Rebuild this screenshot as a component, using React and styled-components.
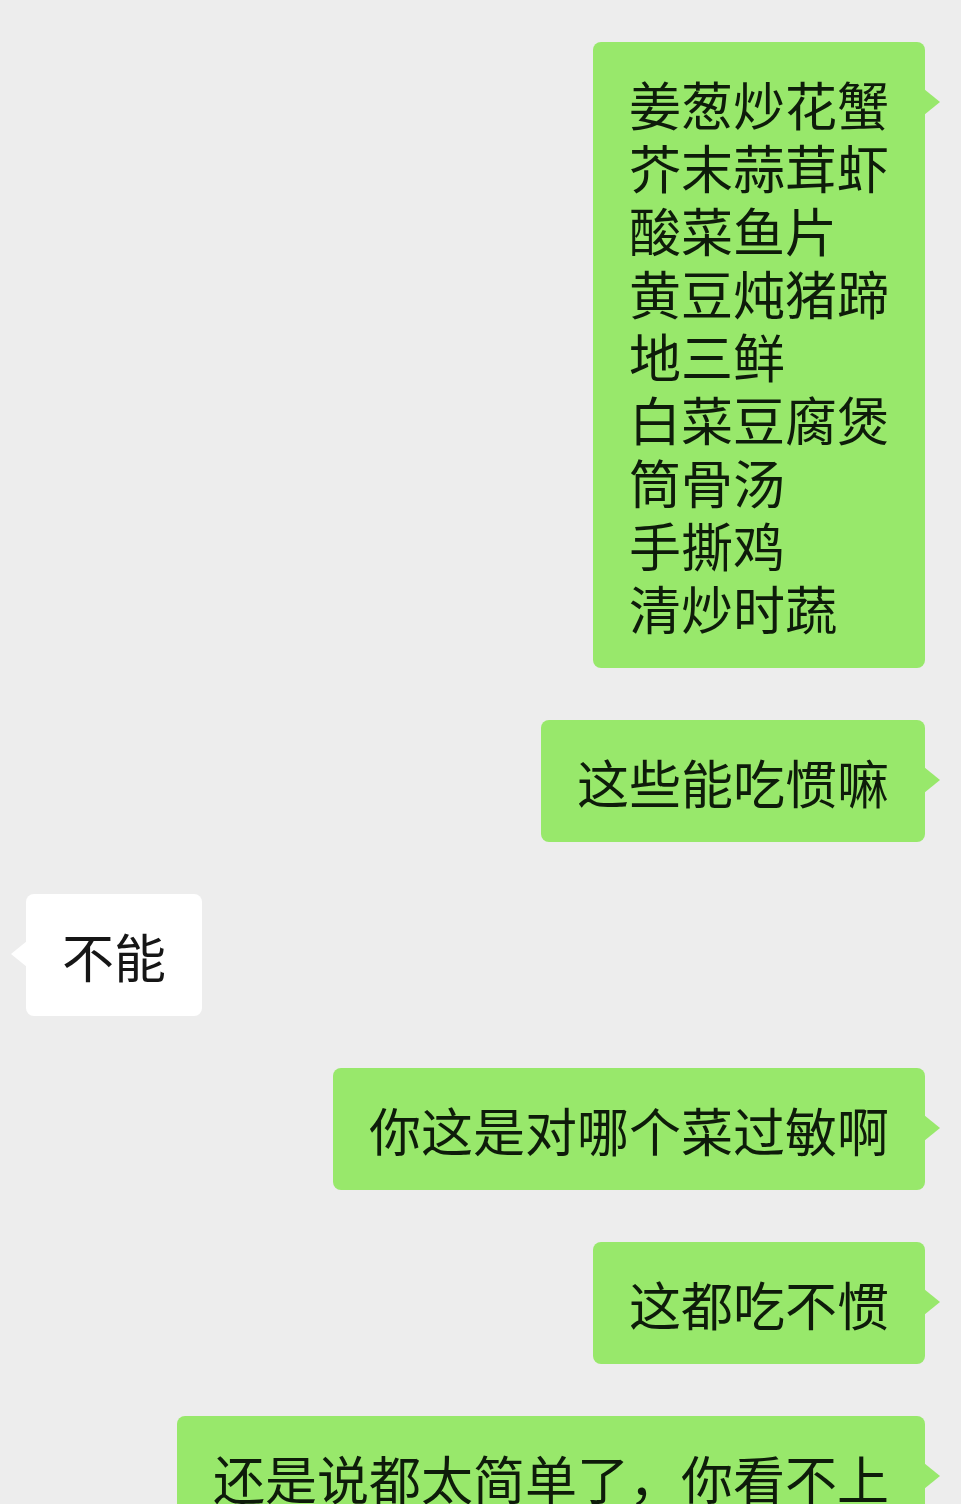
import React from "react";
import styled, { createGlobalStyle } from "styled-components";

const GlobalStyle = createGlobalStyle`
  body {
    margin: 0;
    background: #ededed;
    font-family: "Noto Sans CJK SC", "Noto Sans", sans-serif;
  }
`;

const messages = [
  {
    mine: true,
    lines: [
      "姜葱炒花蟹",
      "芥末蒜茸虾",
      "酸菜鱼片",
      "黄豆炖猪蹄",
      "地三鲜",
      "白菜豆腐煲",
      "筒骨汤",
      "手撕鸡",
      "清炒时蔬",
    ],
  },
  { mine: true, lines: ["这些能吃惯嘛"] },
  { mine: false, lines: ["不能"] },
  { mine: true, lines: ["你这是对哪个菜过敏啊"] },
  { mine: true, lines: ["这都吃不惯"] },
  { mine: true, lines: ["还是说都太简单了，你看不上"] },
];

function App() {
  return (
    <>
      <GlobalStyle />
      <Chat>
        {messages.map((m, i) => (
          <Row key={i} $mine={m.mine}>
            <Bubble $mine={m.mine}>
              {m.lines.map((l, j) => (
                <Line key={j}>{l}</Line>
              ))}
            </Bubble>
          </Row>
        ))}
      </Chat>
    </>
  );
}

export default App;

const Chat = styled.div`
  height: 1504px;
  overflow: hidden;
  box-sizing: border-box;
  padding: 42px 36px 0 26px;
  display: flex;
  flex-direction: column;
  gap: 52px;
`;

const Row = styled.div`
  display: flex;
  justify-content: ${(p) => (p.$mine ? "flex-end" : "flex-start")};
`;

const Bubble = styled.div`
  position: relative;
  max-width: 676px;
  padding: 29.5px 36px;
  border-radius: 8px;
  background: ${(p) => (p.$mine ? "#98e86b" : "#ffffff")};
  color: ${(p) => (p.$mine ? "#0e1c0a" : "#161616")};
  font-size: 52px;
  line-height: 63px;

  &::after {
    content: "";
    position: absolute;
    top: 47px;
    ${(p) => (p.$mine ? "right: -15px;" : "left: -15px;")}
    width: 0;
    height: 0;
    border-top: 13px solid transparent;
    border-bottom: 13px solid transparent;
    ${(p) =>
      p.$mine
        ? "border-left: 16px solid #98e86b;"
        : "border-right: 16px solid #ffffff;"}
  }
`;

const Line = styled.div`
  white-space: nowrap;
`;
